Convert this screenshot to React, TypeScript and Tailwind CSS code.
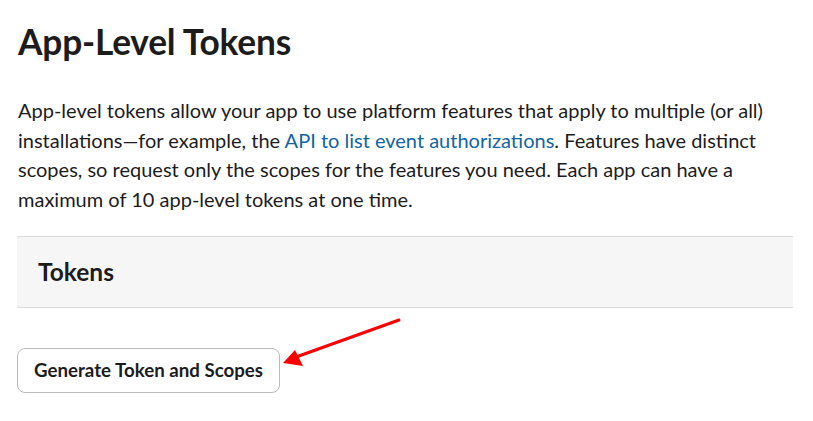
import React from "react";

export default function App() {
  return (
    <div className="relative h-[421px] w-[813px] overflow-hidden bg-white text-[#1d1c1d]" style={{ fontFamily: "Lato, 'Noto Sans', sans-serif" }}>
      <div className="ml-[17px] w-[776px] pt-[20px]">
        <h1 className="pl-[1px] text-[35.3px] font-bold leading-[44px] tracking-[-0.2px]">App-Level Tokens</h1>
        <p className="mt-[32px] pl-[1px] text-[20px] leading-[29.7px]">
          App-level tokens allow your app to use platform features that apply to multiple (or all) installations—for example, the{" "}
          <a className="text-[#1264a3]">API to list event authorizations</a>. Features have distinct scopes, so request only the scopes for the features you need. Each app can have a maximum of 10 app-level tokens at one time.
        </p>
        <div className="mt-[21px] flex h-[72px] items-center border-y border-[#dddddd] bg-[#f6f6f6] pl-[21px]">
          <h2 className="text-[24.5px] font-bold leading-[30px]">Tokens</h2>
        </div>
        <button className="mt-[40px] flex h-[45px] items-center rounded-[8px] border border-[#bbbbbb] bg-white px-[16px] text-[18.7px] font-bold">
          Generate Token and Scopes
        </button>
      </div>
      <svg className="absolute left-0 top-0" width="813" height="421" viewBox="0 0 813 421">
        <line x1="399" y1="320" x2="296" y2="357" stroke="#ff0000" strokeWidth="3" strokeLinecap="round" />
        <polygon points="283,363 295,350 303,366" fill="#ff0000" />
      </svg>
    </div>
  );
}
